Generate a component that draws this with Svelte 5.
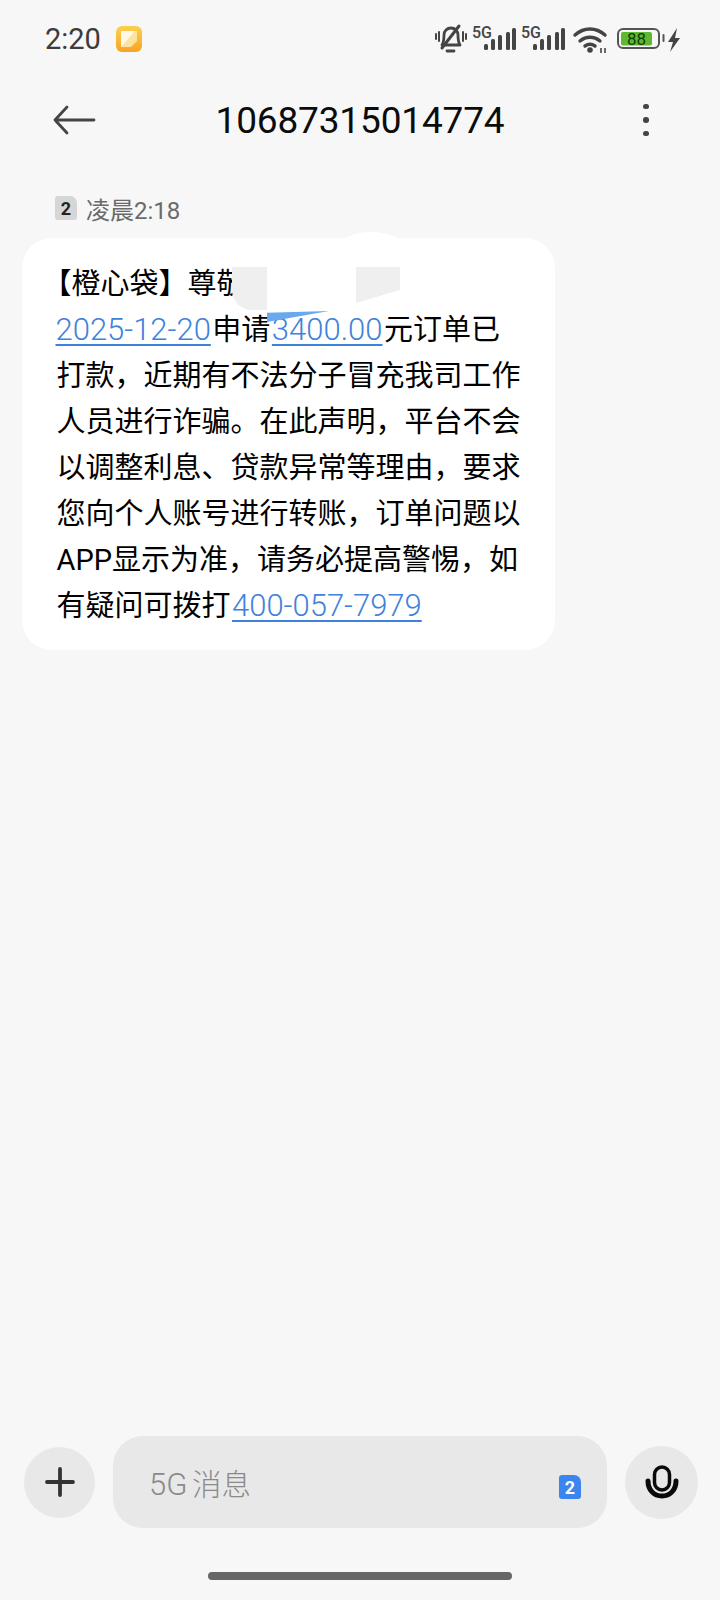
<script>
  const COMMA = '\uFF0C';
  const lines = [
    [{ t: '【橙心袋】尊敬' }],
    [{ t: '2025-12-20', link: true }, { t: '申请' }, { t: '3400.00', link: true }, { t: '元订单已' }],
    [{ t: `打款${COMMA}近期有不法分子冒充我司工作` }],
    [{ t: `人员进行诈骗。在此声明${COMMA}平台不会` }],
    [{ t: `以调整利息、贷款异常等理由${COMMA}要求` }],
    [{ t: `您向个人账号进行转账${COMMA}订单问题以` }],
    [{ t: `APP显示为准${COMMA}请务必提高警惕${COMMA}如` }],
    [{ t: '有疑问可拨打' }, { t: '400-057-7979', link: true }]
  ];

  const signal = [
    { x: 54, y: 24, h: 6 },
    { x: 61, y: 19, h: 11 },
    { x: 68, y: 15, h: 15 },
    { x: 76, y: 12, h: 18 },
    { x: 82, y: 8, h: 22 }
  ];
</script>

<div class="screen">
  <header class="status">
    <div class="status-left">
      <span class="clock">2:20</span>
      <svg class="note" width="26" height="26" viewBox="0 0 26 26">
        <defs>
          <linearGradient id="noteFill" x1="0" y1="0" x2="0" y2="1">
            <stop offset="0" stop-color="#fcd050" />
            <stop offset="1" stop-color="#f8a422" />
          </linearGradient>
        </defs>
        <rect width="26" height="26" rx="6" fill="url(#noteFill)" />
        <path d="M5 5h16v10l-6 6H5z" fill="#fde3a0" />
        <path d="M5 5h14L5 21z" fill="#fff8e6" />
      </svg>
    </div>
    <svg class="status-right" width="254" height="36" viewBox="0 0 254 36">
      <!-- muted bell -->
      <g fill="none" stroke="#444" stroke-linecap="round" stroke-linejoin="round">
        <path d="M12 25c2-3 2-6 2-10 0-4 3-7 7-7 4 0 7 3 7 7 0 4 0 7 2 10z" stroke-width="2.800" />
        <path d="M12 28 29 6" stroke-width="3" />
        <path d="M17 31h7" stroke-width="2.800" />
        <path d="M9 12v9M6 14v5M33 12v9M36 14v5" stroke-width="2" />
      </g>
      {#each [0, 49] as shift}
        <text x={52 + shift} y="18" class="net">5G</text>
        {#each signal as bar}
          <rect x={bar.x + shift} y={bar.y} width="4" height={bar.h} rx="1.500" fill="#444" />
        {/each}
      {/each}
      <!-- wifi -->
      <g fill="none" stroke="#444" stroke-width="3.400" stroke-linecap="round">
        <path d="M145 15c9-8 21-8 30 0" />
        <path d="M150 21c6-5 14-5 20 0" />
        <path d="M155 26c3-2 7-2 10 0" />
      </g>
      <circle cx="160" cy="30" r="2.800" fill="#444" />
      <path d="M171 28v5M175 28v5" stroke="#444" stroke-width="1.600" />
      <!-- battery -->
      <rect x="188" y="9" width="41" height="19" rx="5" fill="none" stroke="#555" stroke-width="2" />
      <rect x="191" y="12" width="31" height="13.500" rx="2" fill="#5fb832" />
      <text x="206.500" y="24.500" class="level">88</text>
      <rect x="232.500" y="14" width="2" height="8" rx="1" fill="#555" />
      <path d="M247 8l-9 14h5l-3 10 10-14h-5z" fill="#444" />
    </svg>
  </header>

  <nav class="bar">
    <svg width="44" height="32" viewBox="0 0 44 32" fill="none" stroke="#444" stroke-width="2.800" stroke-linecap="round" stroke-linejoin="round">
      <path d="M42 16H3M15 3 3 16l12 13" />
    </svg>
    <h1>10687315014774</h1>
    <div class="more"><i></i><i></i><i></i></div>
  </nav>

  <main class="thread">
    <div class="stamp">
      <span class="sim">2</span>
      <span>凌晨2:18</span>
    </div>
    <div class="bubble">
      {#each lines as line, n}
        <div class="line" class:lead={n === 0} class:dated={n === 1}>
          {#each line as part}
            {#if part.link}<a href="#top">{part.t}</a>{:else}<span>{part.t}</span>{/if}
          {/each}
        </div>
      {/each}
      <span class="mask cap"></span>
      <span class="mask white"></span>
      <span class="mask grey-a"></span>
      <span class="mask grey-b"></span>
      <span class="mask blue"></span>
    </div>
  </main>

  <footer class="composer">
    <button class="round plus" aria-label="更多">
      <svg width="30" height="30" viewBox="0 0 30 30" stroke="#333" stroke-width="3.800" stroke-linecap="round">
        <path d="M15 2v26M2 15h26" />
      </svg>
    </button>
    <div class="field">
      <span class="hint">5G <span class="hint-cjk">消息</span></span>
      <span class="sim-blue">2</span>
    </div>
    <button class="round mic" aria-label="语音">
      <svg width="34" height="34" viewBox="0 0 34 34" fill="none" stroke="#0a0a0a" stroke-linecap="round">
        <rect x="9.500" y="2" width="15" height="23" rx="7.500" stroke-width="3.500" />
        <path d="M3 16c0 9 6 15 14 15s14-6 14-15" stroke-width="5" />
      </svg>
    </button>
  </footer>

  <div class="home"></div>
</div>

<style>
  :global(body) {
    margin: 0;
    background: #f7f7f7;
  }

  .screen {
    width: 720px;
    height: 1600px;
    display: flex;
    flex-direction: column;
    background: #f7f7f7;
    font-family: Roboto, "Noto Sans CJK SC", sans-serif;
    color: #000;
    overflow: hidden;
  }

  .status {
    height: 78px;
    flex: none;
    box-sizing: border-box;
    padding: 20px 36px 0 45px;
    display: flex;
    justify-content: space-between;
    align-items: flex-start;
  }

  .status-left {
    display: flex;
    align-items: center;
    gap: 15px;
    height: 38px;
  }

  .clock {
    font-size: 29px;
    color: #3c3c3c;
  }

  .net {
    font-size: 16px;
    font-weight: 500;
    fill: #444;
    text-anchor: middle;
  }

  .level {
    font-size: 17px;
    fill: #0f3d05;
    text-anchor: middle;
  }

  .bar {
    height: 84px;
    flex: none;
    box-sizing: border-box;
    padding: 0 52px;
    display: grid;
    grid-template-columns: 1fr auto 1fr;
    align-items: center;
  }

  .bar h1 {
    margin: 0;
    font-size: 37px;
    font-weight: 400;
    letter-spacing: -0.150px;
    color: #0c0c0c;
  }

  .more {
    justify-self: end;
    display: flex;
    flex-direction: column;
    gap: 8px;
    width: 6px;
    margin-right: 19px;
    align-items: center;
  }

  .more i {
    width: 5.500px;
    height: 5.500px;
    border-radius: 50%;
    background: #444;
  }

  .thread {
    flex: 1;
    padding: 32px 0 0 22px;
  }

  .stamp {
    display: flex;
    align-items: center;
    gap: 9px;
    margin-left: 33px;
    height: 28px;
    font-size: 24px;
    color: #6a6a6a;
  }

  .sim {
    width: 22px;
    height: 24px;
    box-sizing: border-box;
    border-radius: 3px 7px 3px 3px;
    background: #d6d6d6;
    color: #222;
    font-size: 18px;
    font-weight: 700;
    display: flex;
    align-items: center;
    justify-content: center;
  }

  .bubble {
    position: relative;
    box-sizing: border-box;
    width: 533px;
    height: 412px;
    margin-top: 16px;
    padding: 23px 0 0 34.500px;
    background: #fff;
    border-radius: 30px;
  }

  .line {
    height: 46px;
    line-height: 46px;
    font-size: 29px;
    white-space: nowrap;
  }

  /* The opening bracket sits on half an em, as the phone's type does */
  .lead {
    margin-left: -14px;
  }

  .dated {
    margin-left: -2.500px;
  }

  .line a {
    padding: 0 1.500px;
    color: #3f82dc;
    font-size: 31px;
    font-weight: 300;
    text-decoration: underline;
    text-decoration-thickness: 1.500px;
    text-underline-offset: 4px;
  }

  /* Patches painted over the masked part of the first line */
  .mask {
    position: absolute;
  }

  .cap {
    left: 316px;
    top: -6px;
    width: 66px;
    height: 30px;
    border-radius: 50%;
    background: #fff;
  }

  .white {
    left: 211px;
    top: 24px;
    width: 180px;
    height: 50px;
    background: #fff;
  }

  .grey-a {
    left: 210px;
    top: 29px;
    width: 35px;
    height: 43px;
    border-radius: 0 0 0 20px;
    background: #efefef;
  }

  .grey-b {
    left: 334px;
    top: 29px;
    width: 44px;
    height: 36px;
    background: #efefef;
    clip-path: polygon(0 0, 100% 0, 100% 64%, 0 100%);
  }

  .blue {
    left: 245px;
    top: 73px;
    width: 62px;
    height: 11px;
    background: #6aa9ee;
    clip-path: polygon(0 15%, 100% 0, 0 100%);
  }

  .composer {
    flex: none;
    display: flex;
    align-items: center;
    padding: 0 22px 0 24px;
    gap: 18px;
    height: 92px;
    margin-bottom: 44px;
  }

  .round {
    flex: none;
    border: 0;
    padding: 0;
    border-radius: 50%;
    background: #e8e8e8;
    display: flex;
    align-items: center;
    justify-content: center;
  }

  .plus {
    width: 71px;
    height: 71px;
  }

  .mic {
    width: 73px;
    height: 73px;
  }

  .field {
    flex: 1;
    height: 92px;
    box-sizing: border-box;
    padding: 0 26px 0 36px;
    border-radius: 30px;
    background: #e8e8e8;
    display: flex;
    align-items: center;
    justify-content: space-between;
  }

  .hint {
    font-size: 31px;
    font-weight: 300;
    word-spacing: -3px;
    color: #8a8a8a;
  }

  .hint-cjk {
    font-size: 29.500px;
  }

  .sim-blue {
    width: 22px;
    height: 24px;
    margin-top: 10px;
    border-radius: 3px 7px 3px 3px;
    background: #3a85ee;
    color: #fff;
    font-size: 18px;
    font-weight: 700;
    display: flex;
    align-items: center;
    justify-content: center;
  }

  .home {
    flex: none;
    width: 304px;
    height: 8px;
    margin: 0 auto 20px;
    border-radius: 4px;
    background: #666;
  }
</style>
